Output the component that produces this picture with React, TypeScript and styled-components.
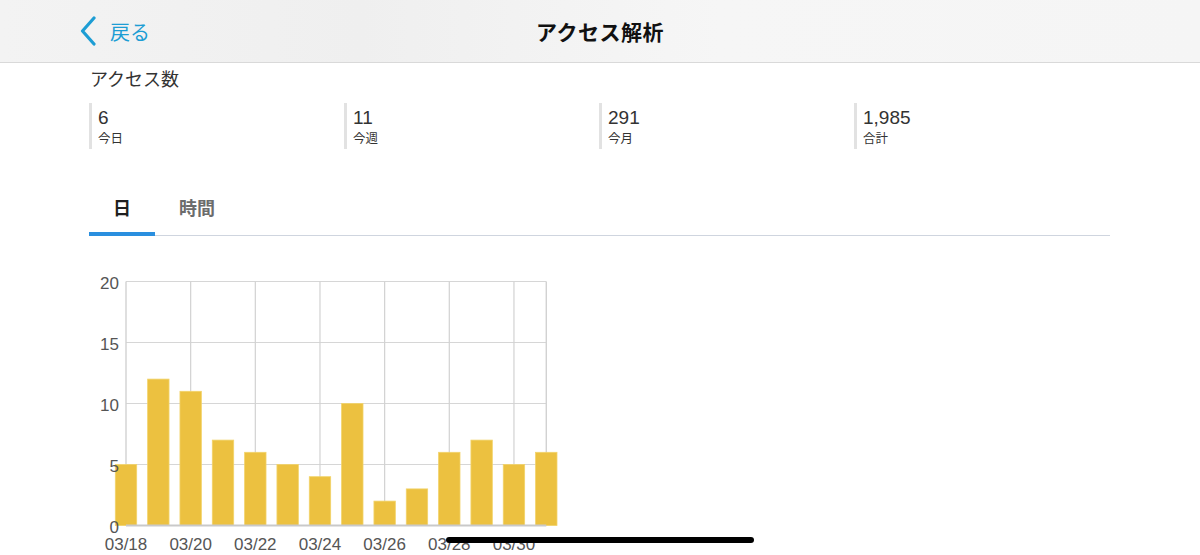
import React, { useState } from "react";
import styled, { createGlobalStyle } from "styled-components";

const GlobalStyle = createGlobalStyle`
  html, body {
    margin: 0;
    padding: 0;
    background: #ffffff;
    font-family: "Liberation Sans", "Noto Sans CJK JP", sans-serif;
    color: #333;
  }
  #root { min-height: 555px; }
`;

const Page = styled.div`
  position: relative;
  width: 1200px;
  height: 555px;
  overflow: hidden;
  background: #fff;
`;

const NavBar = styled.header`
  height: 62px;
  display: grid;
  grid-template-columns: 1fr auto 1fr;
  align-items: center;
  background: linear-gradient(90deg, #f3f3f3 0%, #efefef 30%, #f6f6f6 60%, #f5f5f5 100%);
  border-bottom: 1px solid #d9d9d9;
  box-sizing: content-box;
`;

const BackButton = styled.button`
  justify-self: start;
  display: flex;
  align-items: center;
  gap: 13px;
  margin-left: 79px;
  padding: 0;
  border: none;
  background: none;
  color: #1d9dd4;
  font-family: "Noto Sans CJK JP", sans-serif;
  font-size: 20px;
  cursor: pointer;
`;

const Title = styled.h1`
  margin: 0;
  font-family: "Noto Sans CJK JP", sans-serif;
  font-size: 21px;
  font-weight: 700;
  color: #111;
  letter-spacing: 0.5px;
`;

const Content = styled.main`
  padding: 0 90px 0 89px;
`;

const SectionTitle = styled.h2`
  margin: 3px 0 0 1px;
  font-family: "Noto Sans CJK JP", sans-serif;
  font-size: 18px;
  line-height: 24px;
  font-weight: 400;
  color: #333;
`;

const StatsRow = styled.div`
  display: grid;
  grid-template-columns: repeat(4, 255px);
  margin-top: 13px;
`;

const Stat = styled.div`
  border-left: 3px solid #e2e2e2;
  padding: 4px 0 2px 6px;
  height: 40px;
  display: flex;
  flex-direction: column;
`;

const StatValue = styled.span`
  font-size: 19px;
  line-height: 22px;
  color: #333;
`;

const StatLabel = styled.span`
  font-family: "Noto Sans CJK JP", sans-serif;
  font-size: 12.5px;
  line-height: 18px;
  color: #333;
`;

const Tabs = styled.nav`
  display: flex;
  margin-top: 47px;
  border-bottom: 1px solid #cfd5df;
`;

const Tab = styled.button<{ $active?: boolean }>`
  position: relative;
  padding: 0 24px 17px;
  height: 39px;
  line-height: 22px;
  border: none;
  background: none;
  font-family: "Noto Sans CJK JP", sans-serif;
  font-size: 18px;
  font-weight: 700;
  color: ${(p) => (p.$active ? "#1f1f1f" : "#6c6c6c")};
  cursor: pointer;
  &::after {
    content: "";
    position: absolute;
    left: 0;
    right: 0;
    bottom: -1px;
    height: 4px;
    background: ${(p) => (p.$active ? "#2a8fdf" : "transparent")};
  }
`;

const ChartBox = styled.div`
  margin: 34px 0 0 -9px;
  width: 620px;
  height: 290px;
`;

const HomeIndicator = styled.div`
  position: absolute;
  left: 446px;
  top: 537px;
  width: 308px;
  height: 6px;
  border-radius: 3px;
  background: #000;
`;

const Chevron = () => (
  <svg width="18" height="30" viewBox="0 0 18 30" fill="none">
    <path d="M15 2 L3.5 15 L15 28" stroke="#1d9dd4" strokeWidth="3.2" strokeLinecap="round" strokeLinejoin="round" />
  </svg>
);

const values = [5, 12, 11, 7, 6, 5, 4, 10, 2, 3, 6, 7, 5, 6];
const dates = ["03/18", "03/20", "03/22", "03/24", "03/26", "03/28", "03/30"];

// chart coordinates are relative to ChartBox
const X0 = 46;
const Y0 = 255.5;
const STEP = 32.33;
const UNIT = 12.2;
const BAR_W = 21.4;

const BarChart = () => {
  const right = X0 + STEP * 13;
  const top = Y0 - UNIT * 20;
  return (
    <svg width="620" height="290" viewBox="0 0 620 290">
      {[5, 10, 15, 20].map((v) => (
        <line key={v} x1={X0} x2={right} y1={Y0 - UNIT * v} y2={Y0 - UNIT * v} stroke="#d6d6d6" strokeWidth="1.2" />
      ))}
      {[1, 2, 3, 4, 5, 6].map((k) => (
        <line key={k} x1={X0 + STEP * 2 * k} x2={X0 + STEP * 2 * k} y1={top} y2={Y0} stroke="#d2d2d2" strokeWidth="1.2" />
      ))}
      <line x1={right} x2={right} y1={top} y2={Y0} stroke="#d2d2d2" strokeWidth="1.4" />
      <line x1={X0} x2={X0} y1={top} y2={Y0} stroke="#d2d2d2" strokeWidth="1.4" />
      {values.map((v, i) => {
        const cx = X0 + STEP * i;
        const h = v * UNIT;
        return (
          <rect key={i} x={cx - BAR_W / 2} y={Y0 - h} width={BAR_W} height={h} fill="#ecc140" stroke="#f2d36a" strokeWidth="0.8" />
        );
      })}
      <line x1={X0} x2={right} y1={Y0} y2={Y0} stroke="#c9c9c9" strokeWidth="2" />
      {[0, 5, 10, 15, 20].map((v) => (
        <text key={v} x={X0 - 7} y={Y0 - UNIT * v + 7} textAnchor="end" fontSize="17" fill="#555" fontFamily="Liberation Sans, sans-serif">
          {v}
        </text>
      ))}
      {dates.map((d, k) => (
        <text key={d} x={X0 + STEP * 2 * k} y={Y0 + 24.5} textAnchor="middle" fontSize="17" fill="#555" fontFamily="Liberation Sans, sans-serif">
          {d}
        </text>
      ))}
    </svg>
  );
};

const stats = [
  { value: "6", label: "今日" },
  { value: "11", label: "今週" },
  { value: "291", label: "今月" },
  { value: "1,985", label: "合計" },
];

export default function App() {
  const [tab, setTab] = useState<"day" | "hour">("day");
  return (
    <Page>
      <GlobalStyle />
      <NavBar>
        <BackButton>
          <Chevron />
          <span>戻る</span>
        </BackButton>
        <Title>アクセス解析</Title>
        <div />
      </NavBar>
      <Content>
        <SectionTitle>アクセス数</SectionTitle>
        <StatsRow>
          {stats.map((s) => (
            <Stat key={s.label}>
              <StatValue>{s.value}</StatValue>
              <StatLabel>{s.label}</StatLabel>
            </Stat>
          ))}
        </StatsRow>
        <Tabs>
          <Tab $active={tab === "day"} onClick={() => setTab("day")}>日</Tab>
          <Tab $active={tab === "hour"} onClick={() => setTab("hour")}>時間</Tab>
        </Tabs>
        <ChartBox>
          <BarChart />
        </ChartBox>
      </Content>
      <HomeIndicator />
    </Page>
  );
}
